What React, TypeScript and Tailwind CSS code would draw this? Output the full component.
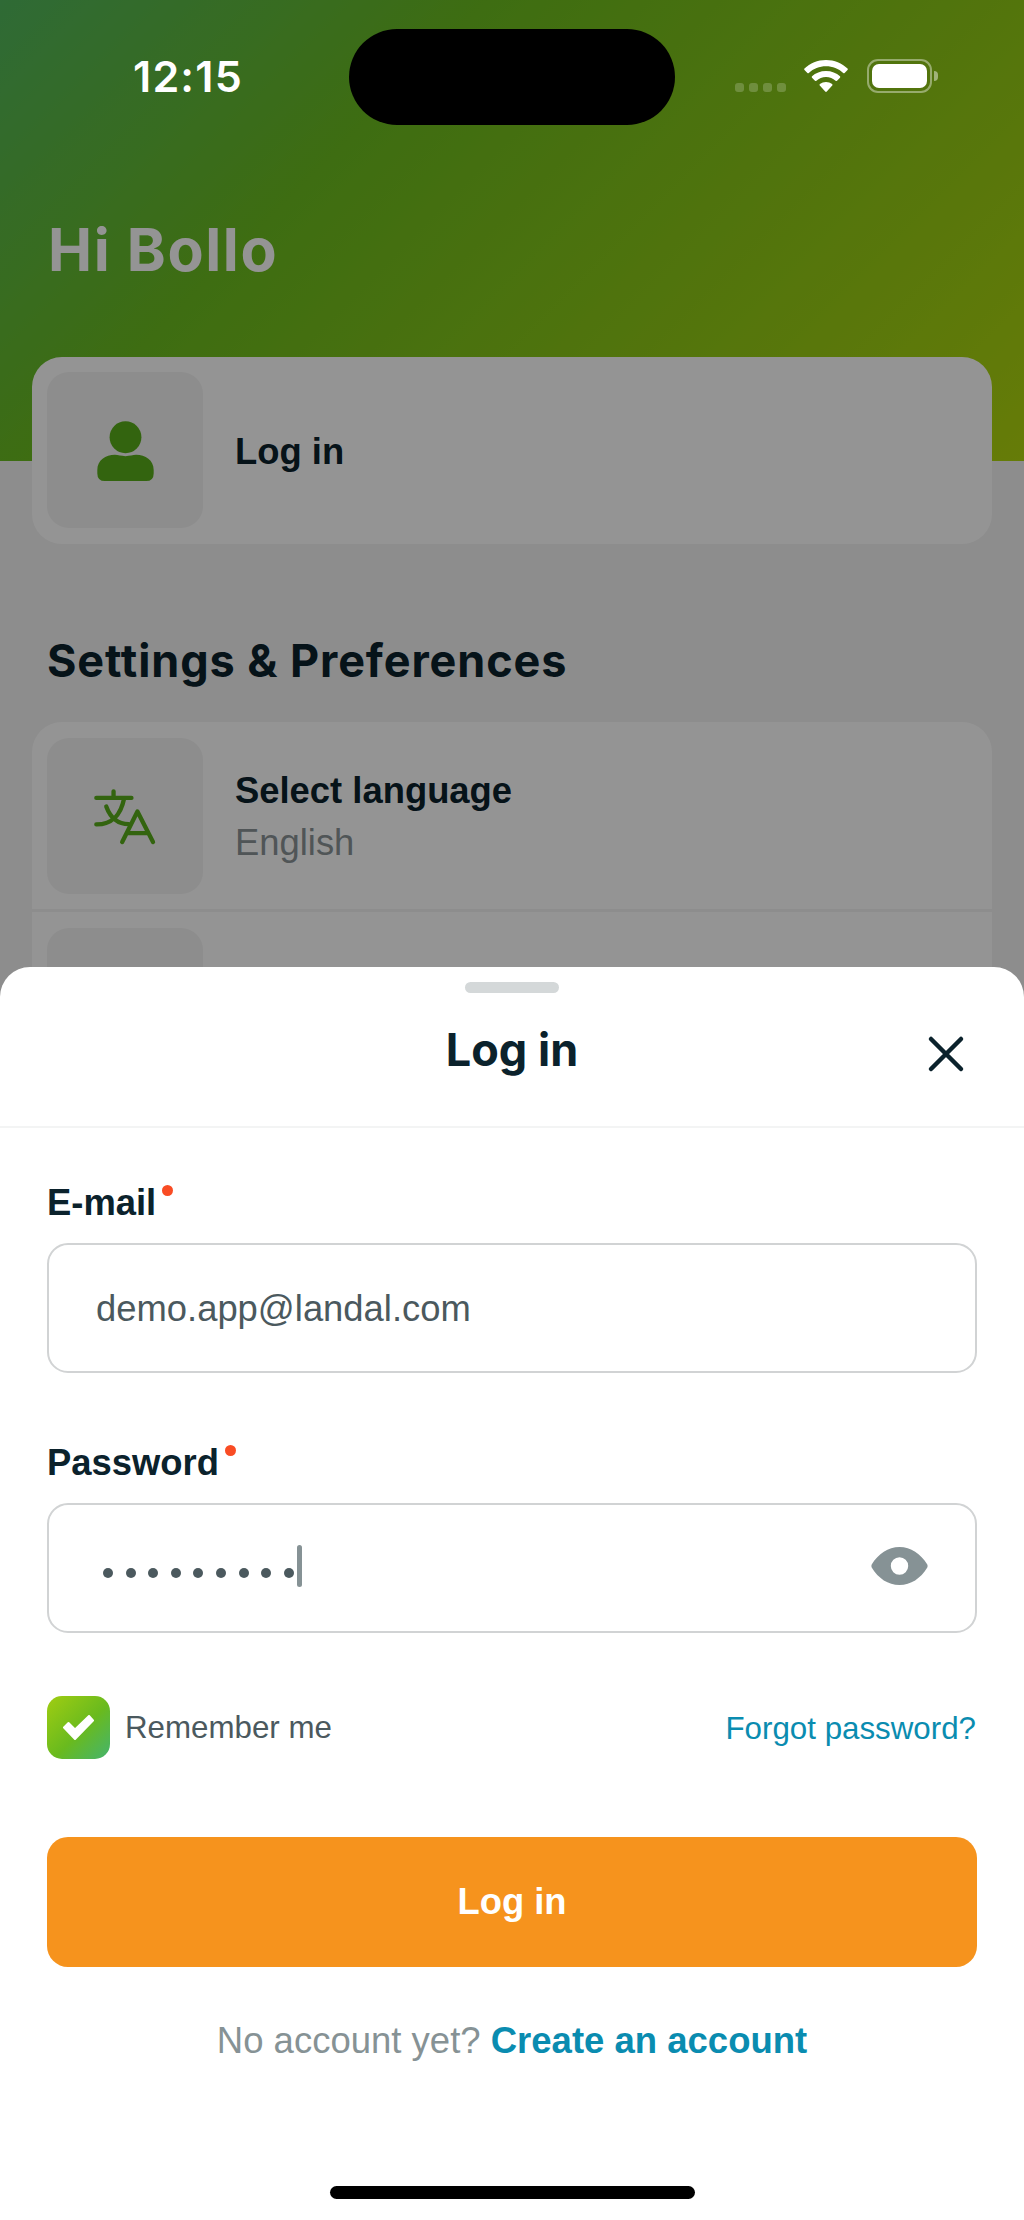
import type { ReactNode } from "react";

const sans = "font-['Liberation_Sans',Arial,sans-serif]";
const display = "font-['Inter','Open_Sans',sans-serif] font-bold";

function StatusBar() {
  return (
    <div className="absolute inset-x-0 top-0 flex h-[154px] items-start text-white">
      <div className="ml-[133px] mt-[50px] w-[216px] font-['Inter',sans-serif] text-[43px] font-semibold leading-[52px] tracking-[1.200px]">
        12:15
      </div>
      <div className="mt-[29px] h-24 w-[326px] rounded-full bg-black" />
      <div className="ml-[60px] mt-[83px] flex gap-[5px]">
        {[0, 1, 2, 3].map((i) => (
          <span key={i} className="size-[9px] rounded-[3px] bg-white/20" />
        ))}
      </div>
      <svg className="ml-[18px] mt-[60px] h-8 w-11" viewBox="0 0 44 32" fill="currentColor">
        <path d="M22 0C13.600 0 6 3.300.5 8.500Q-.2 9.200.5 9.900L3.400 12.900Q4.100 13.500 4.800 12.900C9.400 8.600 15.400 6.200 22 6.200s12.600 2.400 17.200 6.700q.7.600 1.400 0l2.900-3q.7-.7 0-1.400C38 3.300 30.400 0 22 0Z" />
        <path d="M22 11C16.500 11 11.600 13 8 16.300q-.6.700 0 1.400l3 3q.7.600 1.400 0C15 18.400 18.300 17 22 17s7 1.400 9.600 3.700q.7.600 1.400 0l3-3q.6-.7 0-1.400C32.400 13 27.500 11 22 11Z" />
        <path d="M22 22c-2.300 0-4.400.8-6.100 2.100q-.7.700-.1 1.400l5.400 6q.8.800 1.600 0l5.400-6q.6-.7-.1-1.400C26.400 22.800 24.300 22 22 22Z" />
      </svg>
      <div className="ml-[19px] mt-[59px] flex items-center gap-[2px]">
        <div className="h-[34px] w-[65px] rounded-[11px] border-2 border-white/40 p-[3px]">
          <div className="h-full rounded-[7px] bg-white" />
        </div>
        <div className="h-[10px] w-1 rounded-r-full bg-white/45" />
      </div>
    </div>
  );
}

function UserIcon() {
  return (
    <svg className="mt-[2px] h-[60px] w-[57px]" viewBox="290 302 170 181" fill="#58ad1a">
      <circle cx="375" cy="351" r="48" />
      <path d="M290 450C290 420 315 404 343 404C353 404 362 408 375 408C388 408 397 404 407 404C435 404 460 420 460 450V460Q460 483 437 483H313Q290 483 290 460Z" />
    </svg>
  );
}

function LanguageIcon() {
  return (
    <svg
      className="mr-px h-[57px] w-[63px]"
      viewBox="280 262 190 170"
      fill="none"
      stroke="#58ad1a"
      strokeWidth="13"
      strokeLinecap="round"
      strokeLinejoin="round"
    >
      <path d="M342 271V290M290 291H396M374 292C364 342 340 370 290 371M320 317C332 350 352 370 388 370" />
      <path d="M368 424L414 332L461 424M383 397H447" />
    </svg>
  );
}

function Tile({ children }: { children?: ReactNode }) {
  return (
    <div className="flex size-[156px] shrink-0 items-center justify-center rounded-[22px] bg-[#f3f3f3]">
      {children}
    </div>
  );
}

function Field({ label, children }: { label: string; children: ReactNode }) {
  return (
    <div>
      <div className="flex h-[42px] items-start text-[36.400px] font-bold leading-[42px] text-[#0b222c]">
        {label}
        <span className="ml-[6px] mt-[3px] size-[11px] rounded-full bg-[#f94c24]" />
      </div>
      <div className="mt-[19px] flex h-[130px] items-center rounded-[21px] border-2 border-[#d1d3d4] px-[47px]">
        {children}
      </div>
    </div>
  );
}

function Profile() {
  return (
    <div>
      <header className="h-[461px] bg-[linear-gradient(135deg,#51b75d_0%,#6bbc1f_33%,#b0d60e_100%)] pl-[48px] pt-[214px]">
        <h1 className={`${display} whitespace-nowrap text-[59px] leading-[72px] tracking-[1.600px] text-white`}>
          Hi Bollo
        </h1>
      </header>
      <main className="px-8">
        <section className="-mt-[104px] flex h-[187px] items-start rounded-[30px] bg-white p-[15px]">
          <Tile>
            <UserIcon />
          </Tile>
          <span className="ml-8 mt-[59px] text-[36.400px] font-bold leading-[42px] text-[#0b222c]">Log in</span>
        </section>
        <h2 className={`${display} ml-[15px] mt-[89px] whitespace-nowrap text-[45px] leading-[56px] tracking-[0.900px] text-[#0b222c]`}>
          Settings &amp; Preferences
        </h2>
        <section className="mt-[33px] rounded-t-[30px] bg-white">
          <div className="flex h-[190px] items-start border-b-[3px] border-[#f3f3f3] px-[15px] pt-4">
            <Tile>
              <LanguageIcon />
            </Tile>
            <div className="ml-8 mt-[27px] text-[36.400px] leading-[52px]">
              <div className="font-bold text-[#0b222c]">Select language</div>
              <div className="text-[#8a9396]">English</div>
            </div>
          </div>
          <div className="h-[190px] px-[15px] pt-4">
            <Tile />
          </div>
        </section>
      </main>
    </div>
  );
}

function LoginSheet() {
  return (
    <div className="absolute inset-x-0 bottom-0 flex h-[1253px] flex-col rounded-t-[30px] bg-white">
      <div className="h-[161px] border-b-2 border-[#f3f4f4] pt-[15px]">
        <div className="mx-auto h-[11px] w-[94px] rounded-full bg-[#d4d8d9]" />
        <div className="mt-[28px] grid grid-cols-[1fr_auto_1fr] items-center">
          <h2 className={`${display} col-start-2 mt-px whitespace-nowrap text-[45px] leading-[56px] text-[#0b222c]`}>
            Log in
          </h2>
          <svg
            className="mr-[59px] mt-[8px] size-[38px] justify-self-end"
            viewBox="0 0 38 38"
            stroke="#0b222c"
            strokeWidth="4.500"
            strokeLinecap="round"
          >
            <path d="M4 4L34 34M34 4L4 34" />
          </svg>
        </div>
      </div>
      <form className="flex flex-col px-[47px] pt-[54px]">
        <Field label="E-mail">
          <span className="mt-[2px] text-[36.400px] leading-[42px] text-[#4b595e]">demo.app@landal.com</span>
        </Field>
        <div className="h-[69px]" />
        <Field label="Password">
          <div className="ml-[7px] mt-[10px] flex gap-[12.600px]">
            {Array.from({ length: 9 }, (_, i) => (
              <span key={i} className="size-[10px] rounded-full bg-[#4b595e]" />
            ))}
          </div>
          <span className="-mt-1 ml-[3px] h-[42px] w-[5px] rounded-full bg-[#869295]" />
          <svg className="-mt-[4px] ml-auto h-[38px] w-[57px]" viewBox="0 0 57 38" fill="#869295">
            <path
              fillRule="evenodd"
              d="M28.500 0C40 0 49.500 6.500 56.300 17.500Q57 19 56.300 20.500C49.500 31.500 40 38 28.500 38S7.500 31.500.7 20.500Q0 19 .7 17.500C7.500 6.500 17 0 28.500 0ZM28.500 10.300a8.700 8.700 0 1 0 0 17.400a8.700 8.700 0 1 0 0-17.400Z"
            />
          </svg>
        </Field>
        <div className="mt-[63px] flex h-[63px] items-center text-[31.300px] leading-[36px]">
          <div className="flex size-[63px] items-center justify-center rounded-[15px] bg-[linear-gradient(135deg,#a0cd12_0%,#69ba1e_55%,#44b46e_100%)]">
            <svg className="h-[25px] w-[31px]" viewBox="0 0 31 25" fill="white" stroke="white" strokeWidth="2" strokeLinejoin="round">
              <path d="M1 12.500L5.500 8L12 14.500L26 1L30 5.500L12 24Z" />
            </svg>
          </div>
          <span className="ml-[15px] text-[#4b595e]">Remember me</span>
          <a className="ml-auto mr-px mt-[2px] text-[#0a8cb0]">Forgot password?</a>
        </div>
        <button
          type="button"
          className="mt-[78px] h-[130px] rounded-[21px] bg-[#f6931d] text-[36.400px] font-bold leading-[42px] text-white"
        >
          Log in
        </button>
        <p className="mt-[53px] whitespace-nowrap text-center text-[36.500px] leading-[42px] text-[#869295]">
          No account yet? <a className="font-bold text-[#0a8cb0]">Create an account</a>
        </p>
      </form>
      <div className="mx-auto mb-[21px] mt-auto h-[13px] w-[365px] rounded-full bg-black" />
    </div>
  );
}

export default function App() {
  return (
    <div className={`${sans} relative h-[2220px] w-[1024px] overflow-hidden bg-[#f3f3f3]`}>
      <Profile />
      <div className="absolute inset-0 bg-black/42" />
      <LoginSheet />
      <StatusBar />
    </div>
  );
}
